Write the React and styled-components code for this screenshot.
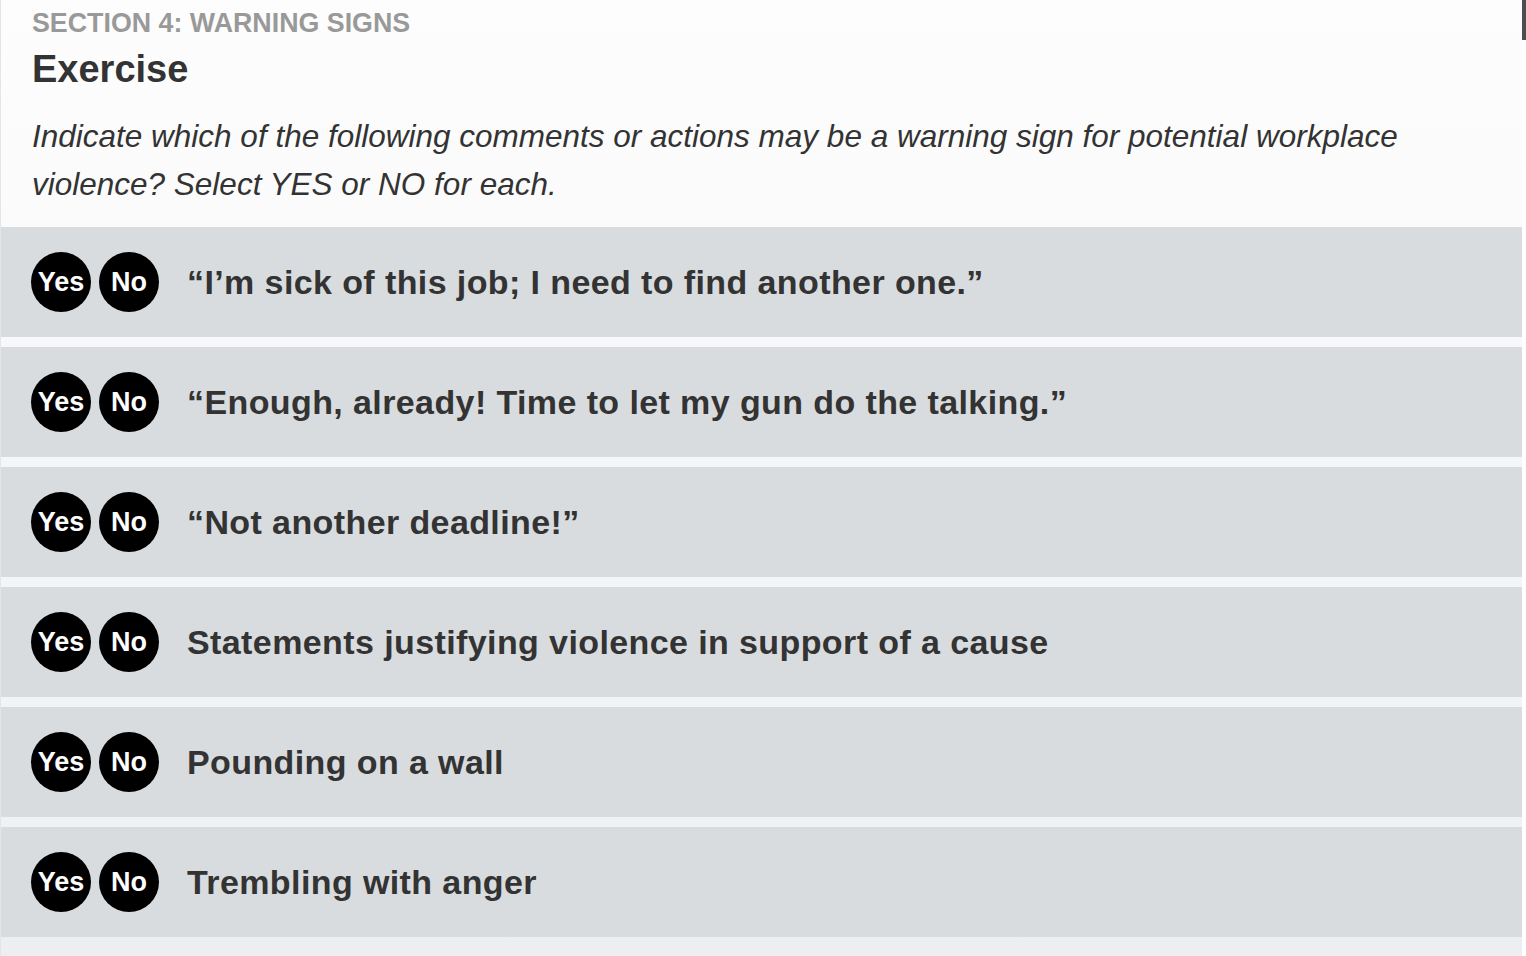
import React from 'react'
import styled, { createGlobalStyle } from 'styled-components'

const GlobalStyle = createGlobalStyle`
  html, body {
    margin: 0;
    padding: 0;
    background: #fff;
    font-family: "Liberation Sans", Arial, sans-serif;
  }
`;

const Screen = styled.div`
  display: flex;
  width: 1526px;
  height: 956px;
  overflow: hidden;
  background: #fff;
`;

const Page = styled.div`
  flex: 0 0 1522px;
  display: flex;
  flex-direction: column;
  box-sizing: border-box;
  border-left: 1px solid #e4e5e6;
  background: linear-gradient(180deg, #fdfdfd 0%, #fbfbfc 22%, #f5f6f8 45%, #f1f3f5 75%, #eceef1 100%);
`;

const ScrollTrack = styled.div`
  flex: 0 0 4px;
  display: flex;
  flex-direction: column;
`;

const ScrollThumb = styled.div`
  height: 40px;
  background: #4a4d52;
`;

const Header = styled.header`
  padding: 8px 30px 19px 31px;
`;

const SectionLabel = styled.div`
  font-size: 26.8px;
  line-height: 30px;
  font-weight: 700;
  color: #999;
  text-transform: uppercase;
`;

const Title = styled.h1`
  margin: 9px 0 0;
  font-size: 38px;
  line-height: 44px;
  font-weight: 700;
  color: #333;
`;

const Prompt = styled.p`
  margin: 21px 0 0;
  font-size: 31.5px;
  line-height: 48px;
  font-style: italic;
  color: #333;
`;

const List = styled.div`
  display: flex;
  flex-direction: column;
  gap: 10px;
`;

const Row = styled.div`
  height: 110px;
  display: flex;
  align-items: center;
  padding-left: 30px;
  background: #d9dcdf;
`;

const Choices = styled.div`
  display: flex;
  gap: 8px;
  margin-right: 28px;
`;

const Choice = styled.button`
  width: 60px;
  height: 60px;
  padding: 0;
  border: none;
  border-radius: 50%;
  background: ${p => (p.$selected ? '#2a6fb0' : '#000')};
  color: #fff;
  font-family: "Liberation Sans", Arial, sans-serif;
  font-size: 27px;
  font-weight: 700;
  display: flex;
  align-items: center;
  justify-content: center;
  cursor: pointer;
`;

const Statement = styled.span`
  font-size: 34px;
  letter-spacing: 0.4px;
  font-weight: 700;
  color: #333;
`;

const items = [
  '\u201CI\u2019m sick of this job; I need to find another one.\u201D',
  '\u201CEnough, already! Time to let my gun do the talking.\u201D',
  '\u201CNot another deadline!\u201D',
  'Statements justifying violence in support of a cause',
  'Pounding on a wall',
  'Trembling with anger',
];

export default function App() {
  return (
    <Screen>
      <GlobalStyle />
      <Page>
        <Header>
          <SectionLabel>Section 4: Warning Signs</SectionLabel>
          <Title>Exercise</Title>
          <Prompt>
            Indicate which of the following comments or actions may be a warning sign for potential workplace
            violence? Select YES or NO for each.
          </Prompt>
        </Header>
        <List>
          {items.map(text => (
            <Row key={text}>
              <Choices>
                <Choice>Yes</Choice>
                <Choice>No</Choice>
              </Choices>
              <Statement>{text}</Statement>
            </Row>
          ))}
        </List>
      </Page>
      <ScrollTrack>
        <ScrollThumb />
      </ScrollTrack>
    </Screen>
  )
}
